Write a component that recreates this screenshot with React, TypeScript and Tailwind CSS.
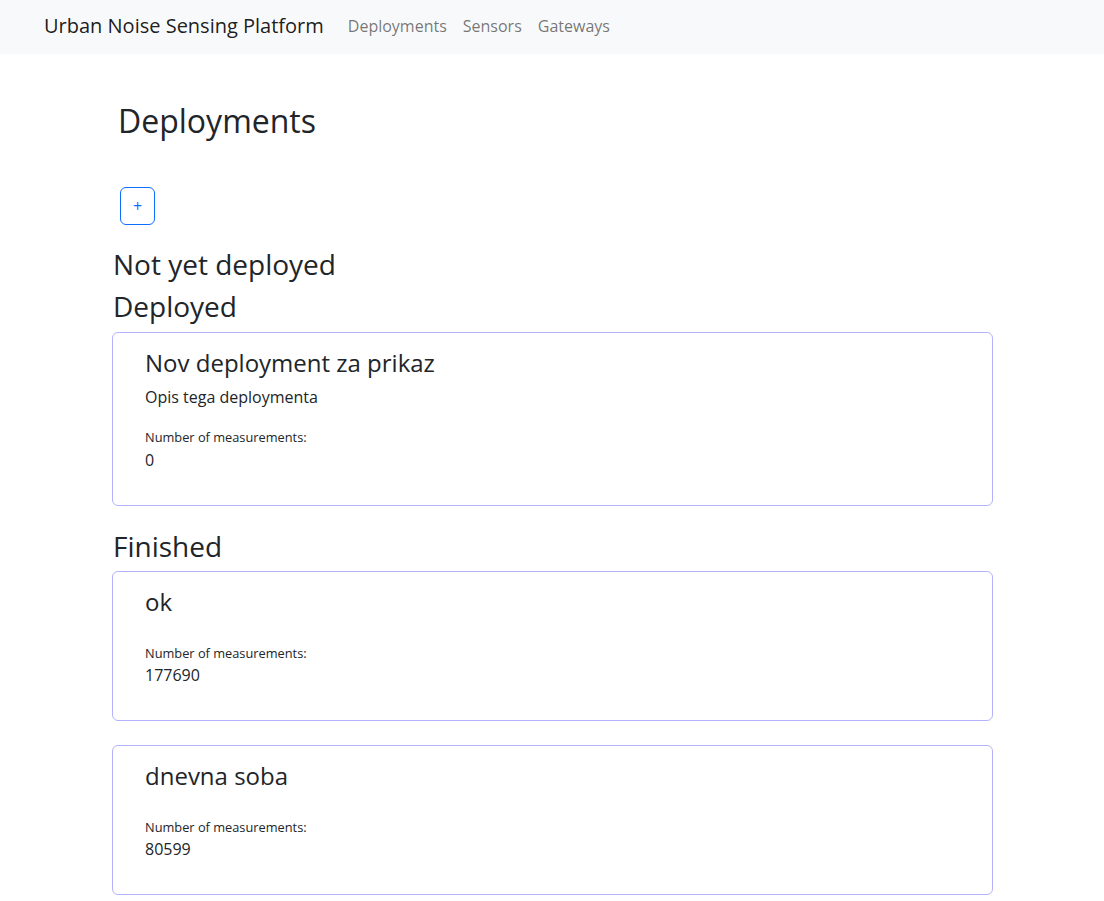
import React from "react";

type Dep = { title: string; desc?: string; count: string };

function Card({ d }: { d: Dep }) {
  return (
    <div className="-ml-px mb-6 flex w-[881px] flex-col rounded-md border border-[#b3b3fd] pl-[32px] pr-4 pt-4 pb-[33px]">
      <h4 className="mb-2 text-[24px] leading-[28.8px] font-normal text-[#212529]">{d.title}</h4>
      {d.desc ? <p className="text-[16px] leading-6 text-[#212529]">{d.desc}</p> : null}
      <div className="mt-[19px] text-[12.8px] leading-[19.2px] text-[#212529]">Number of measurements:</div>
      <div className="text-[16px] leading-6 text-[#212529]">{d.count}</div>
    </div>
  );
}

export default function App() {
  const font = { fontFamily: '"Open Sans", "Noto Sans", sans-serif' };
  const link = "mt-[3.6px] px-2 text-[16px] leading-6 text-[rgba(0,0,0,0.55)]";
  return (
    <div className="min-h-[901px] bg-white text-[#212529]" style={font}>
      <nav className="flex h-[54px] items-start bg-[#f8f9fa] pl-[44px] pt-[10.5px]">
        <span className="mr-4 text-[20px] leading-[30px] text-[rgba(0,0,0,0.9)]">Urban Noise Sensing Platform</span>
        <a className={link}>Deployments</a>
        <a className={link}>Sensors</a>
        <a className={link}>Gateways</a>
      </nav>
      <main className="flex flex-col items-start pl-[113px]">
        <h2 className="ml-[5px] mt-[48px] text-[32px] leading-[38.4px] font-normal">Deployments</h2>
        <button className="ml-[7px] mt-[47px] h-[38px] w-[35px] rounded-md border border-[#0d6efd] text-[16px] leading-6 text-[#0d6efd]">
          +
        </button>
        <h3 className="mt-[23px] mb-2 text-[28px] leading-[33.6px] font-normal">Not yet deployed</h3>
        <h3 className="mb-2 text-[28px] leading-[33.6px] font-normal">Deployed</h3>
        <Card d={{ title: "Nov deployment za prikaz", desc: "Opis tega deploymenta", count: "0" }} />
        <h3 className="mb-2 text-[28px] leading-[33.6px] font-normal">Finished</h3>
        <Card d={{ title: "ok", count: "177690" }} />
        <Card d={{ title: "dnevna soba", count: "80599" }} />
      </main>
    </div>
  );
}
